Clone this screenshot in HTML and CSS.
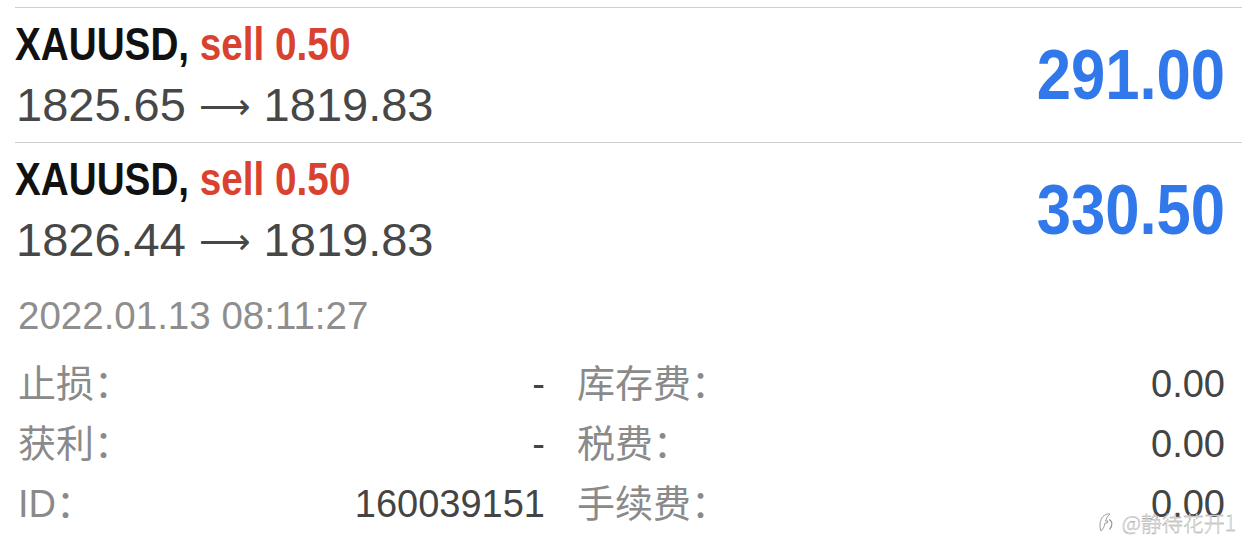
FILE: index.html
```html
<!doctype html>
<html>
<head>
	<meta charset="utf-8">
	<title>Trade history</title>
	<link rel="stylesheet" href="styles.css">
</head>
<body>
	<div id="list">
		<div class="deal">
			<div class="deal-info">
				<div class="deal-title"><span class="narrow">XAUUSD, <span class="sell">sell 0.50</span></span></div>
				<div class="deal-prices">1825.65 <span class="arrow">⟶</span> 1819.83</div>
			</div>
			<div class="deal-profit"><span class="narrow">291.00</span></div>
		</div>
		<div class="deal open">
			<div class="deal-info">
				<div class="deal-title"><span class="narrow">XAUUSD, <span class="sell">sell 0.50</span></span></div>
				<div class="deal-prices">1826.44 <span class="arrow">⟶</span> 1819.83</div>
			</div>
			<div class="deal-profit"><span class="narrow">330.50</span></div>
		</div>
	</div>

	<div id="details">
		<div class="time">2022.01.13 08:11:27</div>
		<div class="grid">
			<div class="cell"><span class="label">止损：</span><span class="value">-</span></div>
			<div class="cell"><span class="label">库存费：</span><span class="value">0.00</span></div>
			<div class="cell"><span class="label">获利：</span><span class="value">-</span></div>
			<div class="cell"><span class="label">税费：</span><span class="value">0.00</span></div>
			<div class="cell"><span class="label">ID：</span><span class="value">160039151</span></div>
			<div class="cell"><span class="label">手续费：</span><span class="value">0.00</span></div>
		</div>
	</div>

	<div id="watermark">
		<svg width="16" height="22" viewBox="0 0 16 22">
			<path d="M3 20 C1 15 2 9 5 5.5 C7 3.5 10 2.5 12 3 C10 4.5 8.5 7 7.5 10 L10 10 L9.2 12 L7 12 C6.5 15 5.5 17.5 3 20 Z" fill="#fff" stroke="#9a9a9a" stroke-width="1"/>
			<path d="M11 8.5 C14.5 10 15 14.5 11.5 18.5" fill="none" stroke="#9a9a9a" stroke-width="1.2"/>
		</svg>
		<span>@静待花开1</span>
	</div>
</body>
</html>
```
FILE: styles.css
```css
html, body {
	margin: 0;
	padding: 0;
	background: #fff;
}

body {
	font-family: "Liberation Sans", "Noto Sans CJK SC", sans-serif;
	position: relative;
	width: 1242px;
	height: 555px;
	overflow: hidden;
}

#list {
	padding-top: 7px;
	padding-left: 15px;
}

.deal {
	display: flex;
	align-items: center;
	border-top: 1px solid #cfcfcf;
	padding: 8px 17px 4px 0;
}

.deal.open {
	padding-bottom: 0;
}

.deal-info {
	flex: 1;
}

/* no condensed face installed, so squeeze the bold one */
.narrow {
	display: inline-block;
	transform-origin: left center;
	transform: scaleX(0.823);
	white-space: nowrap;
}

.deal-title {
	font-weight: bold;
	font-size: 47px;
	line-height: 56px;
	color: #111;
}

.sell {
	color: #d9422f;
}

.deal-prices {
	font-size: 47px;
	line-height: 66px;
	color: #474747;
	padding-left: 1px;
}

.arrow {
	font-family: "DejaVu Sans", sans-serif;
	font-size: 36px;
	line-height: 0;
	vertical-align: 2px;
}

.deal-profit {
	font-weight: bold;
	font-size: 70px;
	line-height: 80px;
	color: #3179ea;
	padding-bottom: 4px;
}

.deal-profit .narrow {
	transform-origin: right center;
	transform: scaleX(0.88);
}

#details {
	padding: 19px 17px 0 18px;
}

.time {
	font-size: 38.5px;
	line-height: 48px;
	color: #8e8e8e;
}

.grid {
	display: grid;
	grid-template-columns: 527px 1fr;
	column-gap: 32px;
	margin-top: 14px;
}

.cell {
	display: flex;
	justify-content: space-between;
	font-size: 38px;
	line-height: 60px;
}

.label {
	color: #8a8a8a;
}

.value {
	color: #444;
}

#watermark {
	position: absolute;
	right: 6px;
	top: 507px;
	display: flex;
	align-items: center;
	gap: 8px;
	font-family: "Noto Sans CJK SC", sans-serif;
	font-size: 21px;
	font-weight: 300;
	color: #fff;
	-webkit-text-stroke: 0.4px #9a9a9a;
}
```
